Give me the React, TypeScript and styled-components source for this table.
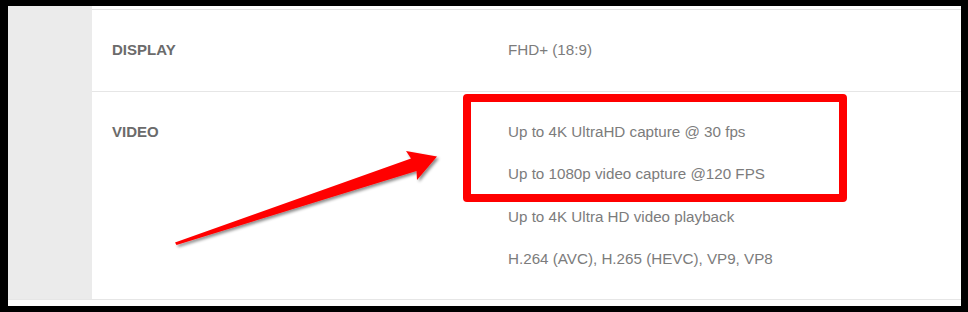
import React from "react";
import styled, { createGlobalStyle } from "styled-components";

const Global = createGlobalStyle`
  html, body { margin: 0; padding: 0; background: #000; }
  body { font-family: "Liberation Sans", Arial, sans-serif; }
`;

const Frame = styled.div`
  position: relative;
  margin: 6px 7px 6px 8px;
  height: 300px;
  background: #fff;
  display: flex;
  flex-direction: column;
`;

const Body = styled.div`
  display: flex;
  height: 293px;
  border-bottom: 1px solid #e6e6e6;
`;

const Sidebar = styled.div`
  width: 84px;
  flex: none;
  background: #ebebeb;
`;

const Table = styled.div`
  flex: 1;
  padding-top: 3px;
  display: flex;
  flex-direction: column;
`;

const Row = styled.div<{ $last?: boolean }>`
  display: grid;
  grid-template-columns: 396px 1fr;
  padding: 19px 0 19px 20px;
  border-top: 1px solid #e6e6e6;
  flex: ${(p) => (p.$last ? 1 : "none")};
`;

const Label = styled.div`
  font-weight: 700;
  font-size: 15px;
  line-height: 42.5px;
  color: #6b6b6b;
  text-transform: uppercase;
`;

const Values = styled.div`
  display: flex;
  flex-direction: column;
`;

const Value = styled.div`
  font-size: 15.2px;
  line-height: 42.5px;
  color: #7c7c7c;
  white-space: nowrap;
`;

const Highlight = styled.div`
  position: absolute;
  left: 455px;
  top: 88px;
  width: 384px;
  height: 108px;
  box-sizing: border-box;
  border: 8px solid #ff0000;
  border-radius: 4px;
  pointer-events: none;
`;

const Arrow = styled.svg`
  position: absolute;
  left: 152px;
  top: 134px;
  width: 300px;
  height: 110px;
  overflow: visible;
  pointer-events: none;
`;

const specs = [
  { label: "Display", values: ["FHD+ (18:9)"] },
  {
    label: "Video",
    values: [
      "Up to 4K UltraHD capture @ 30 fps",
      "Up to 1080p video capture @120 FPS",
      "Up to 4K Ultra HD video playback",
      "H.264 (AVC), H.265 (HEVC), VP9, VP8",
    ],
  },
];

export default function App() {
  return (
    <>
      <Global />
      <Frame>
        <Body>
          <Sidebar />
          <Table>
            {specs.map((s, i) => (
              <Row key={s.label} $last={i === specs.length - 1}>
                <Label>{s.label}</Label>
                <Values>
                  {s.values.map((v) => (
                    <Value key={v}>{v}</Value>
                  ))}
                </Values>
              </Row>
            ))}
          </Table>
        </Body>
        <Highlight />
        <Arrow viewBox="160 140 300 110">
          <defs>
            <filter id="shadow" x="-10%" y="-20%" width="130%" height="160%">
              <feDropShadow dx="2" dy="2" stdDeviation="1.4" floodColor="#000" floodOpacity="0.45" />
            </filter>
          </defs>
          <polygon
            points="175,242.5 411,158.5 406,151 437,156.5 417,180 416.5,171 176.5,245"
            fill="#ff0000"
            filter="url(#shadow)"
            strokeLinejoin="round"
          />
        </Arrow>
      </Frame>
    </>
  );
}
